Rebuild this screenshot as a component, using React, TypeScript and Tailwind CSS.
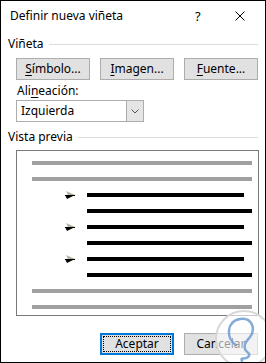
import React from 'react';

const Bullet: React.FC = () => (
  <svg width="11" height="9" viewBox="0 0 11 9" className="shrink-0">
    <polygon points="1,0 10,4 3,4" fill="#b8b0a0" />
    <polygon points="0,4 10,4 2,8" fill="#000" />
    <line x1="0" y1="4.5" x2="10" y2="4.5" stroke="#000" strokeWidth="1" />
  </svg>
);

const Button: React.FC<{ u: string; rest: string; focused?: boolean }> = ({ u, rest, focused }) => (
  <div
    className={
      focused
        ? 'w-[74px] h-[22px] bg-[#e1e1e1] border-2 border-[#0078d7] p-px'
        : 'w-[74px] h-[22px] bg-[#e1e1e1] border border-[#adadad] flex items-center justify-center'
    }
  >
    {focused ? (
      <div className="w-full h-full border border-dotted border-black flex items-center justify-center">
        {u}
        {rest}
      </div>
    ) : (
      <span>
        <span className="underline underline-offset-2">{u}</span>
        {rest}
      </span>
    )}
  </div>
);

const GroupTitle: React.FC<{ label: string }> = ({ label }) => (
  <div className="h-[14px] flex items-center pl-[7px] pr-[7px] gap-[5px]">
    <span>{label}</span>
    <div className="flex-1 h-px bg-[#dcdcdc]" />
  </div>
);

const Line: React.FC<{ className: string }> = ({ className }) => <div className={'h-[4px] ' + className} />;

const App: React.FC = () => {
  return (
    <div
      className="w-[266px] h-[363px] bg-white border border-black relative overflow-hidden text-[12px] text-black leading-none"
      style={{ fontFamily: '"Segoe UI", "Noto Sans", sans-serif' }}
    >
      <div className="h-[30px] flex items-center pl-[9px]">
        <span className="flex-1">Definir nueva viñeta</span>
        <span className="w-[40px] text-[13px]">?</span>
        <svg width="10" height="10" viewBox="0 0 10 10" className="mr-[20px]">
          <path d="M0.5 0.5 L9.5 9.5 M9.5 0.5 L0.5 9.5" stroke="#000" strokeWidth="1" />
        </svg>
      </div>

      <div className="mt-[6px]">
        <GroupTitle label="Viñeta" />
      </div>
      <div className="mt-[7px] pl-[15px] flex gap-[10px]">
        <Button u="S" rest="ímbolo..." />
        <Button u="I" rest="magen..." />
        <Button u="F" rest="uente..." />
      </div>

      <div className="mt-[4px] h-[14px] pl-[16px] flex items-center">
        <span>
          Ali<span className="underline underline-offset-2">n</span>eación:
        </span>
      </div>
      <div className="mt-[2px] ml-[15px] w-[128px] h-[22px] border border-[#adadad] flex">
        <div className="flex-1 flex items-center pl-[4px]">Izquierda</div>
        <div className="w-[17px] bg-[#e5e5e5] border-l border-[#adadad] flex items-center justify-center">
          <svg width="8" height="5" viewBox="0 0 8 5">
            <path d="M0.5 0.5 L4 4 L7.5 0.5" stroke="#555" fill="none" strokeWidth="1" />
          </svg>
        </div>
      </div>

      <div className="mt-[8px]">
        <GroupTitle label="Vista previa" />
      </div>
      <div className="mt-[6px] ml-[15px] w-[243px] h-[166px] border border-[#7a7a7a] pt-[10px] pl-[15px] flex flex-col gap-[12px]">
        <Line className="w-[220px] bg-[#a0a0a0]" />
        <Line className="w-[220px] bg-[#a0a0a0]" />
        {[0, 1, 2].map((i) => (
          <React.Fragment key={i}>
            <div className="h-[4px] flex items-center">
              <div className="w-[33px]" />
              <Bullet />
              <div className="w-[11px]" />
              <div className="w-[157px] h-[4px] bg-black" />
            </div>
            <div className="h-[4px] pl-[55px]">
              <div className="w-[165px] h-[4px] bg-black" />
            </div>
          </React.Fragment>
        ))}
        <Line className="w-[220px] bg-[#a0a0a0]" />
        <Line className="w-[220px] bg-[#a0a0a0]" />
      </div>

      <div className="mt-[17px] pl-[99px] flex gap-[10px]">
        <Button u="" rest="Aceptar" focused />
        <div className="w-[74px] h-[22px] bg-[#e1e1e1] border border-[#adadad] flex items-center justify-center">
          Cancelar
        </div>
      </div>

      <svg width="60" height="60" viewBox="0 0 60 60" className="absolute left-[213px] top-[308px] pointer-events-none">
        <circle cx="30" cy="30" r="28" fill="#ffffff" fillOpacity="0.6" stroke="#d8d8d8" strokeWidth="2" />
        <path
          d="M22 36 C12 30 12 12 26 10 C38 8 42 20 36 28 C32 33 30 34 31 40 C32 44 38 44 34 48 C30 51 26 48 28 52"
          fill="none"
          stroke="#6f9bd0"
          strokeWidth="2.5"
          strokeLinecap="round"
          opacity="0.85"
        />
      </svg>
    </div>
  );
};

export default App;
